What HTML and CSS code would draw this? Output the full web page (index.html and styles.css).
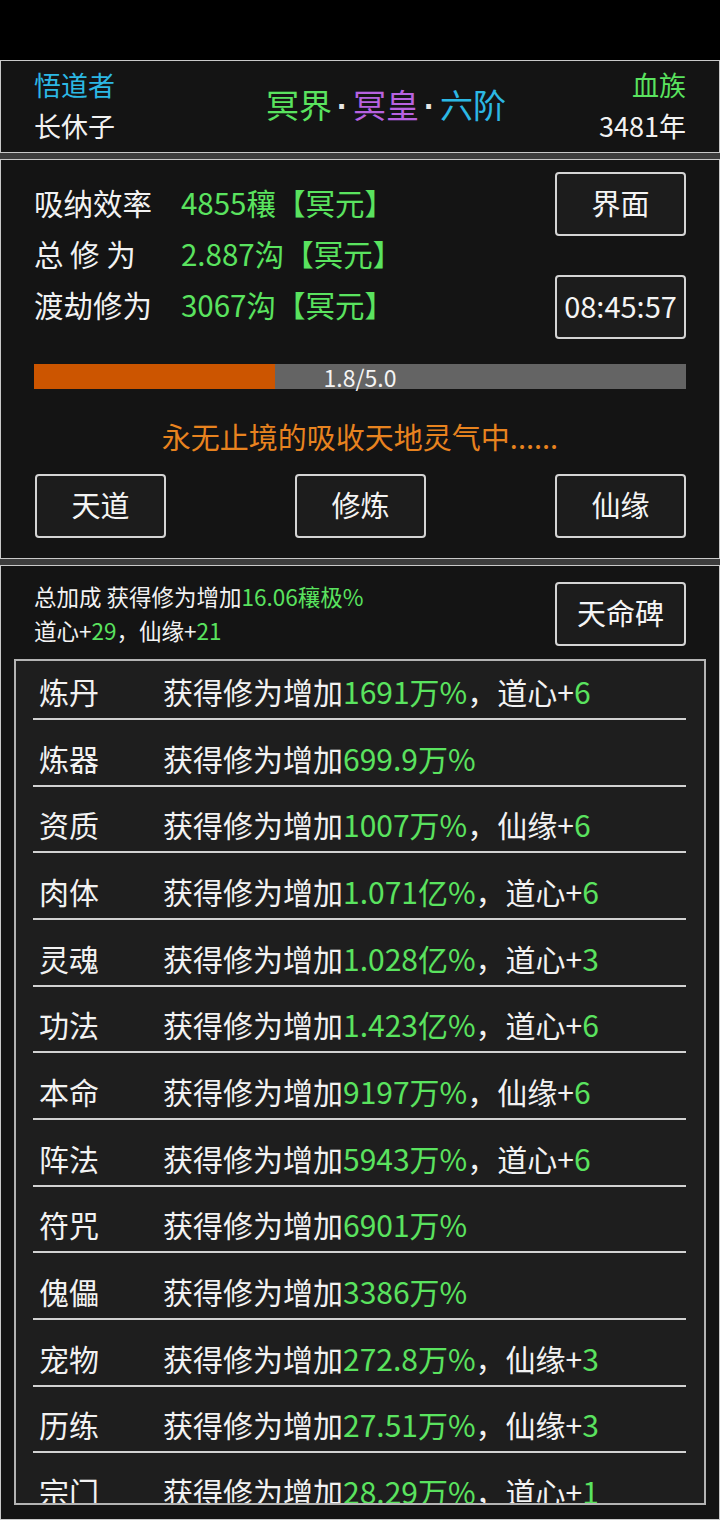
FILE: index.html
```html
<!DOCTYPE html>
<html lang="zh-CN">
<head>
<meta charset="utf-8">
<title>修仙</title>
<link rel="stylesheet" href="styles.css">
</head>
<body>
<div class="status"></div>
<main class="screen">
  <section class="panel head">
    <div class="who">
      <div class="cyan">悟道者</div>
      <div>长休子</div>
    </div>
    <div class="title"><span class="green">冥界</span><span class="dot">·</span><span class="purple">冥皇</span><span class="dot">·</span><span class="cyan">六阶</span></div>
    <div class="race">
      <div class="green">血族</div>
      <div>3481年</div>
    </div>
  </section>

  <section class="panel main">
    <div class="top">
      <div class="stats">
        <div class="stat"><span class="label">吸纳效率</span><span class="green">4855穰【冥元】</span></div>
        <div class="stat"><span class="label">总 修 为</span><span class="green">2.887沟【冥元】</span></div>
        <div class="stat"><span class="label">渡劫修为</span><span class="green">3067沟【冥元】</span></div>
      </div>
      <div class="side">
        <div class="btn">界面</div>
        <div class="btn">08:45:57</div>
      </div>
    </div>
    <div class="bar">
      <div class="fill" style="width:37%"></div>
      <span class="bar-text">1.8/5.0</span>
    </div>
    <div class="msg">永无止境的吸收天地灵气中......</div>
    <div class="actions">
      <div class="btn">天道</div>
      <div class="btn">修炼</div>
      <div class="btn">仙缘</div>
    </div>
  </section>

  <section class="panel bonus">
    <div class="bonus-head">
      <div class="summary">
        <div>总加成 获得修为增加<span class="green">16.06穰极%</span></div>
        <div>道心+<span class="green">29</span>，仙缘+<span class="green">21</span></div>
      </div>
      <div class="btn">天命碑</div>
    </div>
    <div class="list">
      <div class="row"><div class="line"><span class="name">炼丹</span><span>获得修为增加<span class="green">1691万%</span>，道心+<span class="green">6</span></span></div></div>
      <div class="row"><div class="line"><span class="name">炼器</span><span>获得修为增加<span class="green">699.9万%</span></span></div></div>
      <div class="row"><div class="line"><span class="name">资质</span><span>获得修为增加<span class="green">1007万%</span>，仙缘+<span class="green">6</span></span></div></div>
      <div class="row"><div class="line"><span class="name">肉体</span><span>获得修为增加<span class="green">1.071亿%</span>，道心+<span class="green">6</span></span></div></div>
      <div class="row"><div class="line"><span class="name">灵魂</span><span>获得修为增加<span class="green">1.028亿%</span>，道心+<span class="green">3</span></span></div></div>
      <div class="row"><div class="line"><span class="name">功法</span><span>获得修为增加<span class="green">1.423亿%</span>，道心+<span class="green">6</span></span></div></div>
      <div class="row"><div class="line"><span class="name">本命</span><span>获得修为增加<span class="green">9197万%</span>，仙缘+<span class="green">6</span></span></div></div>
      <div class="row"><div class="line"><span class="name">阵法</span><span>获得修为增加<span class="green">5943万%</span>，道心+<span class="green">6</span></span></div></div>
      <div class="row"><div class="line"><span class="name">符咒</span><span>获得修为增加<span class="green">6901万%</span></span></div></div>
      <div class="row"><div class="line"><span class="name">傀儡</span><span>获得修为增加<span class="green">3386万%</span></span></div></div>
      <div class="row"><div class="line"><span class="name">宠物</span><span>获得修为增加<span class="green">272.8万%</span>，仙缘+<span class="green">3</span></span></div></div>
      <div class="row"><div class="line"><span class="name">历练</span><span>获得修为增加<span class="green">27.51万%</span>，仙缘+<span class="green">3</span></span></div></div>
      <div class="row"><div class="line"><span class="name">宗门</span><span>获得修为增加<span class="green">28.29万%</span>，道心+<span class="green">1</span></span></div></div>
    </div>
  </section>
</main>
</body>
</html>
```

FILE: styles.css
```css
* { box-sizing: border-box; }

html, body {
  margin: 0;
  padding: 0;
}

body {
  width: 720px;
  height: 1520px;
  overflow: hidden;
  background: #000;
  color: #f2f2f2;
  font-family: "Noto Sans CJK SC", "Noto Sans", sans-serif;
}

.status {
  height: 60px;
  background: #000;
}

.screen {
  display: flex;
  flex-direction: column;
  gap: 6px;
  background: #3d3d3d;
  height: 1460px;
}

.panel {
  border: 1px solid #c9c9c9;
  background: #141414;
}

.green { color: #5ae35f; }
.cyan { color: #2cb8e4; }
.purple { color: #b862e0; }

/* header panel */
.head {
  height: 93px;
  display: flex;
  align-items: center;
  padding: 0 33px 3px 33px;
}

.who, .race {
  font-size: 27px;
  line-height: 41px;
}

.who { width: 202px; }

.race {
  width: 150px;
  text-align: right;
}

.title {
  flex: 1;
  text-align: center;
  font-size: 33px;
  line-height: 44px;
  white-space: nowrap;
}

.dot {
  display: inline-block;
  width: 21px;
  text-align: center;
  font-family: "Liberation Sans", sans-serif;
  font-weight: bold;
  color: #e6e6e6;
}

/* main panel */
.main {
  height: 400px;
  display: flex;
  flex-direction: column;
}

.top {
  display: flex;
  justify-content: space-between;
  padding: 0 33px 0 33px;
}

.stats {
  padding-top: 17px;
  font-size: 29.5px;
  line-height: 51px;
}

.stat {
  display: flex;
}

.label {
  width: 147px;
  white-space: pre;
}

.side {
  padding-top: 12px;
  display: flex;
  flex-direction: column;
  gap: 39px;
}

.btn {
  width: 131px;
  height: 64px;
  padding-bottom: 4px;
  border: 2px solid #d4d4d4;
  border-radius: 4px;
  background: #1c1c1c;
  color: #f4f4f4;
  font-size: 29px;
  display: flex;
  align-items: center;
  justify-content: center;
}

.bar {
  position: relative;
  margin: 25px 33px 0;
  height: 25px;
  background: #646464;
}

.fill {
  height: 100%;
  background: #cc5500;
}

.bar-text {
  position: absolute;
  left: 0;
  right: 0;
  top: 0;
  text-align: center;
  font-size: 23px;
  line-height: 26px;
  color: #f4f4f4;
}

.msg {
  margin-top: 27px;
  text-align: center;
  font-size: 29px;
  line-height: 40px;
  color: #e8831f;
}

.actions {
  margin-top: 18px;
  display: flex;
  justify-content: space-between;
  padding: 0 33px 0 34px;
}

/* bonus panel */
.bonus {
  flex: 1;
  display: flex;
  flex-direction: column;
  min-height: 0;
}

.bonus-head {
  display: flex;
  justify-content: space-between;
  align-items: flex-start;
  padding: 0 33px 0 33px;
}

.summary {
  padding-top: 13px;
  font-size: 22.5px;
  line-height: 34px;
}

.bonus-head .btn {
  margin-top: 16px;
}

.list {
  margin: 12px 13px 0;
  height: 846px;
  border: 2px solid #b4b4b4;
  background: #1e1e1e;
  overflow: hidden;
}

.row {
  padding: 0 18px 0 17px;
  margin-bottom: 7.67px;
}

.line {
  display: flex;
  padding: 9px 0 6px;
  font-size: 30px;
  line-height: 42px;
  border-bottom: 2px solid #d2d2d2;
  white-space: nowrap;
}

.name {
  width: 130px;
  padding-left: 6px;
}
```
